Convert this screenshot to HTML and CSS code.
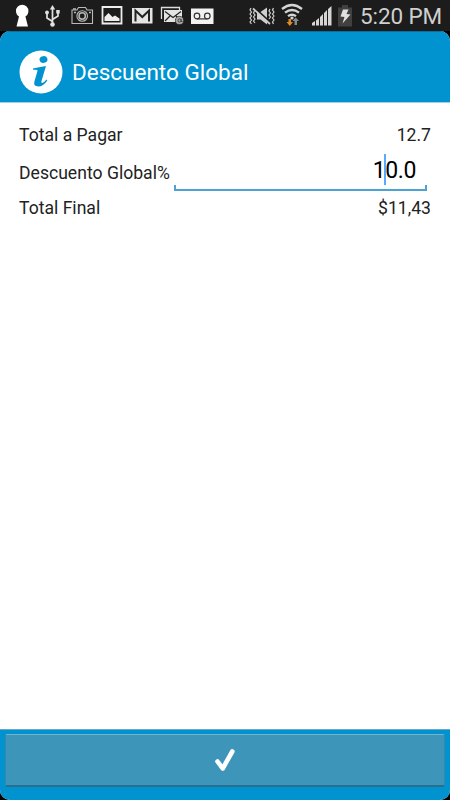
FILE: index.html
```
<!DOCTYPE html>
<html lang="es">
<head>
    <meta charset="UTF-8">
    <meta name="viewport" content="width=device-width, initial-scale=1.0">
    <title>Descuento Global</title>
    <link rel="stylesheet" href="styles.css">
</head>
<body>
    <div class="status-bar">
        <div class="status-left">
            <svg viewBox="0 0 30 31"><path d="M9.500 26.500 12 16.500Q9 14.500 9 11a6.200 6.200 0 0 1 12.400 0q0 3.500-3 5.500L21 26.500z" fill="#fff"/></svg>
            <svg viewBox="0 0 30 31" fill="none" stroke="#e2e2e2" stroke-width="1.700"><path d="M15.500 8v16M15.500 21.500 10 18v-5M15.500 19.500l5.500-3.500v-4"/><path d="m12.800 9.500 2.700-4.500 2.700 4.500z" fill="#e2e2e2" stroke="none"/><circle cx="15.500" cy="24.500" r="2.300" fill="#e2e2e2" stroke="none"/><circle cx="10" cy="12.500" r="1.900" fill="#e2e2e2" stroke="none"/><path d="M19.200 10h3.500v3.500h-3.500z" fill="#e2e2e2" stroke="none"/></svg>
            <svg viewBox="0 0 30 31" fill="none" stroke="#b9b9b9" stroke-width="1.100"><path d="M5 10h5l1.500-2.500h7L20 10h5.500v13.500H5z"/><circle cx="15.200" cy="16" r="5.300"/><circle cx="15.200" cy="16" r="3.200" stroke-width="1.500"/><path d="M7 12.500h2M22 12.500h2M6 9h3" stroke-width="1.500"/></svg>
            <svg viewBox="0 0 30 31"><path d="M5.500 7h19v16.500h-19z" fill="none" stroke="#eee" stroke-width="1.800"/><path d="M7.500 21v-4l4-4 4 4 2.500-1.500 4.500 3V21z" fill="#eee"/></svg>
            <svg viewBox="0 0 30 31"><path d="M5 8h20.500v15.500H5z" fill="#e4e4e4"/><path d="M8.500 21.500V10.500l6.800 6.500L22 10.500v11" fill="none" stroke="#222" stroke-width="2"/></svg>
            <svg viewBox="0 0 30 31"><path d="M4.500 19V7.500h18V10" fill="none" stroke="#ddd" stroke-width="1.300"/><path d="M7 10h18v12H7z" fill="#e4e4e4"/><path d="m8 11.500 8 6 8-6M8 21l5-5M23 20l-4-4" fill="none" stroke="#222" stroke-width="1.200"/><circle cx="22.500" cy="20.500" r="4.100" fill="#aaa" stroke="#222" stroke-width=".7"/><circle cx="22.500" cy="20.500" r="1.600" fill="none" stroke="#444"/><path d="M24.100 19v2.500h1.500" fill="none" stroke="#444"/></svg>
            <svg viewBox="0 0 30 31"><path d="M4 8.500h22.500V24H4z" fill="#f2f2f2"/><g fill="none" stroke="#333" stroke-width="1.200"><circle cx="10" cy="16" r="2.800"/><circle cx="20.300" cy="16" r="2.800"/><path d="M10 18.900h10.300"/></g></svg>
        </div>
        <div class="status-right">
            <svg viewBox="0 0 30 31" fill="none" stroke="#cfcfcf" stroke-width="1.200"><path d="M10 12h3.500L20 7.500v17l-6.500-5H10z" fill="#cfcfcf" stroke="none"/><path d="m6.500 7 17 15.500" stroke="#1c1c1c" stroke-width="2"/><path d="m6 8.500 17 15.500" stroke-width="1.700"/><path d="M4 8l-1 2 1.500 2L3 14l1.500 2L3 18l1.500 2L3 22l1.500 2M7.500 11 6.500 13 8 15l-1.500 2L8 19l-1.500 2L8 23M23 9l-1 2 1.500 2-1.500 2 1.500 2-1.500 2M26.500 8l-1 2 1.500 2-1.500 2 1.500 2-1.500 2 1.500 2-1.500 2 1 2"/></svg>
            <svg viewBox="0 0 30 31" fill="none" stroke="#d5d5d5" stroke-width="2.300"><path d="M5 9q10-8 20 0M8 12.700q7-5.500 14 0M11 16.200q4-3 8 0"/><circle cx="15" cy="18" r="1.600" fill="#d5d5d5" stroke="none"/><path d="M11.500 19h2.500v3h2L12.800 26l-3.300-4h2z" fill="#e08a22" stroke="none"/><path d="M17.500 25v-4h-2l3.200-3.500L22 21h-2v4z" fill="#888" stroke="none"/></svg>
            <svg viewBox="0 0 30 31" fill="#d5d5d5"><path d="M5 25.500v-2.500l3-2v4.500zM9 25.500v-5l3-2.500v7.500zM13 25.500V17l3-3v11.500zM17 25.500V13l3-3v15.500zM21 25.500V9l3.500-3v19.500z"/></svg>
            <svg class="battery" viewBox="0 0 16 31"><path d="M1 7.500h4V5h6v2.500h4v19H1z" fill="#404040"/><path d="M6 9.500h5.500L9.500 14l4 .5L5.500 23.500 7.500 17 3.500 16.500z" fill="#e0e0e0"/></svg>
            <span class="clock">5:20 PM</span>
        </div>
    </div>

    <div class="dialog">
        <div class="header">
            <svg class="info-icon" viewBox="0 0 44 44">
                <circle cx="22" cy="22" r="21.500" fill="#fff"/>
                <ellipse cx="24.500" cy="9.500" rx="4" ry="3.300" fill="#0093d0" transform="rotate(-12 24.500 9.500)"/>
                <path d="M14 18.500q5.500-1.500 13-2.500L22.500 31q-.6 2 .6 2 1.900-.4 4.400-3.500l.8.900q-4 6-9.200 6-4.900 0-3.700-4.900l3-10.200q.6-1.500-1-1.600H14z" fill="#0093d0"/>
            </svg>
            <div class="title">Descuento Global</div>
        </div>

        <div class="content">
            <div class="row">
                <span>Total a Pagar</span>
                <span class="value">12.7</span>
            </div>
            <div class="row row-input">
                <span class="label">Descuento Global%</span>
                <div class="field"><span>1<i class="cursor"></i>0.0</span></div>
            </div>
            <div class="row">
                <span>Total Final</span>
                <span class="value">$11,43</span>
            </div>
        </div>

        <div class="footer">
            <button class="accept" aria-label="Aceptar">
                <svg viewBox="0 0 24 26"><path d="m4.500 14.500 5.200 7L19.300 4.500" fill="none" stroke="#fff" stroke-width="4.600" stroke-linecap="round" stroke-linejoin="round"/></svg>
            </button>
        </div>
    </div>
</body>
</html>
```
FILE: styles.css
```
* {
    box-sizing: border-box;
}
body {
    margin: 0;
    height: 800px;
    display: flex;
    flex-direction: column;
    background-color: #000;
    font-family: Roboto, sans-serif;
    overflow: hidden;
}
.status-bar {
    height: 31px;
    flex: none;
    display: flex;
    justify-content: space-between;
    background-color: #1c1c1c;
    padding: 0 8px 0 7px;
}
.status-left,
.status-right {
    display: flex;
}
.status-bar svg {
    width: 30px;
    height: 31px;
    flex: none;
}
.status-bar .battery {
    width: 16px;
}
.clock {
    width: 82px;
    margin-left: 7px;
    color: #cfcfcf;
    font-size: 22.5px;
    line-height: 33px;
    letter-spacing: -0.1px;
    white-space: nowrap;
}
.dialog {
    flex: 1;
    display: flex;
    flex-direction: column;
    border-radius: 10px;
    overflow: hidden;
    background-color: #fff;
}
.header {
    height: 72px;
    display: flex;
    align-items: center;
    padding: 9px 19px 0;
    background-color: #0093d0;
    border-top: 1px solid #0a6f9e;
    border-bottom: 1px solid #a5cfe4;
}
.info-icon {
    width: 44px;
    height: 44px;
}
.title {
    margin-left: 9px;
    padding-top: 1px;
    color: #fff;
    font-size: 22.5px;
}
.content {
    flex: 1;
    padding: 19px 19px;
    color: #222;
    font-size: 17.6px;
}
.row {
    display: flex;
    justify-content: space-between;
    height: 26px;
    line-height: 26px;
}
.row-input {
    height: 47px;
}
.label {
    padding-top: 12px;
    white-space: nowrap;
}
.field {
    flex: 1;
    height: 43px;
    margin: 0 4px 0 4px;
    padding-right: 11px;
    border-bottom: 2px solid #4ba3d3;
    text-align: right;
    color: #000;
    font-size: 23px;
    letter-spacing: -0.4px;
    line-height: 46px;
    position: relative;
}
/* short ticks at both ends of the underline */
.field::before,
.field::after {
    content: "";
    position: absolute;
    bottom: 0;
    width: 2px;
    height: 4px;
    background-color: #4ba3d3;
}
.field::before {
    left: 0;
}
.field::after {
    right: 0;
}
.cursor {
    display: inline-block;
    width: 2px;
    height: 31px;
    margin: 0 -1px;
    vertical-align: -7px;
    background-color: #5aa9fa;
}
.footer {
    height: 71px;
    padding: 4px 5px 13px;
    background-color: #0093d0;
    border-top: 1px solid #6aa5ca;
}
.accept {
    display: flex;
    align-items: center;
    justify-content: center;
    width: 100%;
    height: 53px;
    padding: 0;
    background-color: #3d95b9;
    border: 1px solid #3887a8;
    border-top-color: #73b4cd;
    border-bottom: 2px solid #2a6e8c;
    border-radius: 2px;
}
.accept svg {
    width: 24px;
    height: 26px;
}
```
